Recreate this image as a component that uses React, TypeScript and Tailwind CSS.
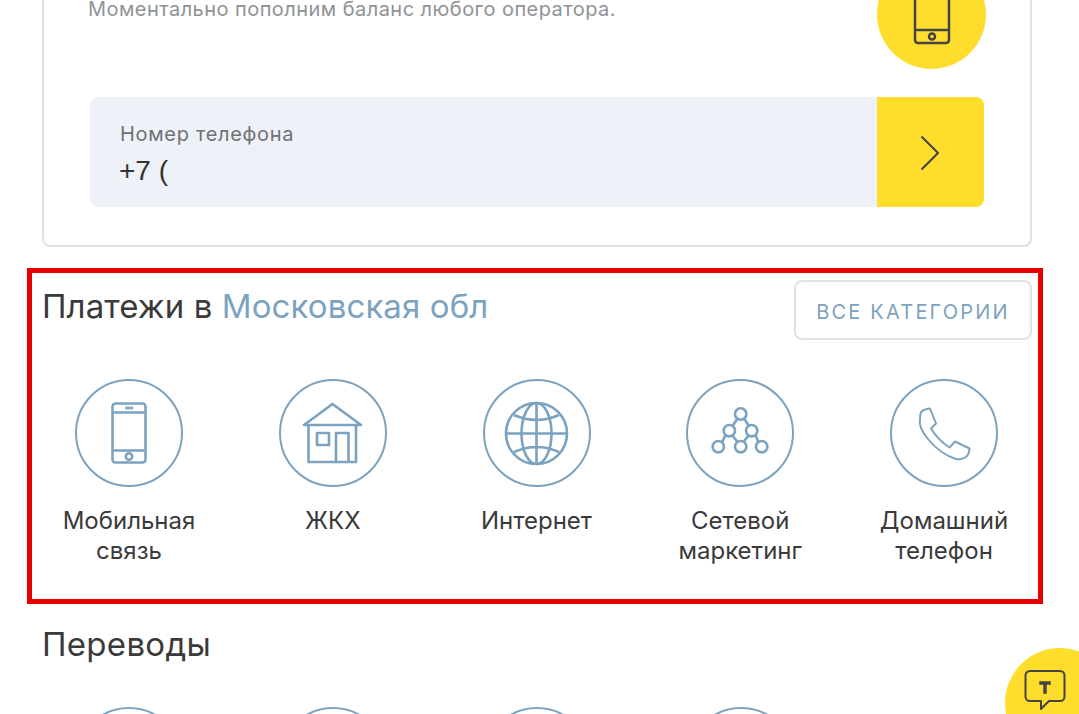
const FONT = "[font-family:Inter,'Noto_Sans',sans-serif]";
const ICON = "block -m-[2.5px] w-[108px] h-[108px] max-w-none";

function PhoneIcon() {
  return (
    <svg viewBox="0 0 108 108" className={ICON} fill="none" stroke="#7ba3c0" strokeWidth="2.6">
      <rect x="37.500" y="24.500" width="33" height="59" rx="3" />
      <path d="M37.500 33.500h33M37.500 71.500h33M50 29h8" />
      <circle cx="54" cy="77.500" r="3.200" />
    </svg>
  );
}

function HouseIcon() {
  return (
    <svg viewBox="0 0 108 108" className={ICON} fill="none" stroke="#7ba3c0" strokeWidth="2.6" strokeLinejoin="round">
      <path d="M26 46L54.500 25 83 46z" />
      <path d="M30.500 46v37h47.500V46" />
      <rect x="39" y="54" width="12" height="12" />
      <path d="M58 83V54h12.500v29" />
    </svg>
  );
}

function GlobeIcon() {
  return (
    <svg viewBox="0 0 108 108" className={ICON} fill="none" stroke="#7ba3c0" strokeWidth="2.6">
      <circle cx="54.500" cy="54.500" r="30.500" />
      <ellipse cx="54.500" cy="54.500" rx="15" ry="30.500" />
      <path d="M54.500 24v61M24 54.500h61M32 36Q54.500 46 77 36M32 73Q54.500 63 77 73" />
    </svg>
  );
}

function NetworkIcon() {
  return (
    <svg viewBox="0 0 108 108" className={ICON} fill="none" stroke="#7ba3c0" strokeWidth="2.6">
      <circle cx="54.700" cy="35" r="5.700" />
      <circle cx="43.300" cy="51.700" r="5.700" />
      <circle cx="65.700" cy="51.700" r="5.700" />
      <circle cx="32.300" cy="67.700" r="5.700" />
      <circle cx="54.700" cy="67.700" r="5.700" />
      <circle cx="75.700" cy="67.700" r="5.700" />
      <path d="M51.500 39.500l-5 7.500M58 39.500l5 7.500M46.500 56.500l5 6.500M62.500 56.500l-5 6.500M39.500 56l-3.500 7.500M69.500 56l3 7.500" />
    </svg>
  );
}

function HandsetIcon() {
  return (
    <svg viewBox="0 0 108 108" className={ICON} fill="none" stroke="#7ba3c0" strokeWidth="2" strokeLinejoin="round">
      <path d="M31 33Q35 29.500 40 29.500L46 44.500 41 49.500Q48 61 59.500 68.500L65 62.500 79.500 69.500Q79 76 76 78 72 81 66 80 50 75 38 60 28 48 30 40 30 36 31 33z" />
    </svg>
  );
}

const categories = [
  { label: ["Мобильная", "связь"], icon: <PhoneIcon /> },
  { label: ["ЖКХ"], icon: <HouseIcon /> },
  { label: ["Интернет"], icon: <GlobeIcon /> },
  { label: ["Сетевой", "маркетинг"], icon: <NetworkIcon /> },
  { label: ["Домашний", "телефон"], icon: <HandsetIcon /> },
];

function Circle({ children }: { children?: React.ReactNode }) {
  return (
    <div className="w-[108px] h-[108px] shrink-0 rounded-full border-[2.5px] border-[#7ba3c0] box-border">
      {children}
    </div>
  );
}

export default function App() {
  return (
    <div className={`relative h-[714px] overflow-hidden bg-white pl-[42px] pr-[47px] ${FONT}`}>
      {/* Верхняя карточка */}
      <div className="-mt-[60px] h-[307px] rounded-b-lg border-2 border-[#e2e2e2] pl-[46px] pr-[46px]">
        <div className="flex justify-between items-start h-[155px] -mr-[2px]">
          <p className="-ml-[2px] pt-[53px] text-[20px] leading-[28px] tracking-[0.45px] text-[#8f9396]">
            Моментально пополним баланс любого оператора.
          </p>
          <div className="mt-[18px] w-[109px] h-[109px] rounded-full bg-[#ffdd2d] flex items-center justify-center">
            <svg width="38" height="62" viewBox="0 0 38 62" fill="none" stroke="#444" strokeWidth="2.5">
              <rect x="2" y="2" width="34" height="57" rx="3" />
              <path d="M2 46h34" />
              <circle cx="19" cy="52.500" r="3" />
            </svg>
          </div>
        </div>
        <div className="flex h-[110px] rounded-lg overflow-hidden">
          <div className="flex-1 bg-[#eef1f7] pl-[29px] pt-[25px]">
            <div className="pl-[1px] text-[20px] leading-[24px] tracking-[0.7px] text-[#6f7276]">Номер телефона</div>
            <div className="mt-[7px] text-[28px] leading-[36px] text-[#333] [font-family:'Liberation_Sans',sans-serif]">+7 (</div>
          </div>
          <div className="w-[107px] bg-[#ffdd2d] flex items-center justify-center">
            <svg width="19" height="36" viewBox="0 0 19 36" fill="none" stroke="#444" strokeWidth="2" className="mt-[2px] -ml-[3px]">
              <path d="M1.500 1.500L18 18 1.500 34.500" />
            </svg>
          </div>
        </div>
      </div>

      {/* Платежи */}
      <section className="mt-[21px] -ml-[15px] -mr-[11px] h-[336px] border-[5px] border-[#e60000] box-border">
        <div className="flex justify-between items-start pl-[10px] pr-[6px] pt-[7px]">
          <h2 className="pt-[5px] text-[33px] leading-[42px] tracking-[0.1px] font-normal text-[#3a3a3a]">
            Платежи в <span className="text-[#7ba3c0]">Московская обл</span>
          </h2>
          <button className="w-[238px] h-[60px] pt-[3px] rounded-lg border-2 border-[#e2e2e2] text-[20px] tracking-[2.2px] text-[#7ba3c0] bg-white">
            ВСЕ КАТЕГОРИИ
          </button>
        </div>
        <div className="mt-[39px] flex justify-between pl-[33px] pr-[30px]">
          {categories.map((c) => (
            <div key={c.label[0]} className="w-[128px] flex flex-col items-center">
              <Circle>{c.icon}</Circle>
              <div className="mt-[19px] text-center text-[24px] leading-[30px] text-[#3a3a3a] whitespace-nowrap">
                {c.label.map((l) => (
                  <div key={l}>{l}</div>
                ))}
              </div>
            </div>
          ))}
        </div>
      </section>

      {/* Переводы */}
      <h2 className="mt-[19px] text-[33px] leading-[42px] tracking-[0.3px] font-normal text-[#3a3a3a]">Переводы</h2>
      <div className="mt-[42px] flex gap-[96px] pl-[33px]">
        {[0, 1, 2, 3].map((i) => (
          <Circle key={i} />
        ))}
      </div>

      {/* Чат */}
      <button className="absolute left-[1005px] top-[648px] w-[110px] h-[110px] rounded-full bg-[#ffdd2d]">
        <svg width="42" height="42" viewBox="0 0 42 42" fill="none" stroke="#444" strokeWidth="2" strokeLinejoin="round" className="absolute left-[19px] top-[21px]">
          <path d="M6 2h30a4.500 4.500 0 0 1 4.500 4.500v21a4.500 4.500 0 0 1-4.500 4.500H25l-8 8v-8H6a4.500 4.500 0 0 1-4.500-4.500v-21A4.500 4.500 0 0 1 6 2z" />
          <path d="M15.500 12.500h11v3h-4v9h-3v-9h-4z" fill="#444" strokeWidth="0.5" />
        </svg>
      </button>
    </div>
  );
}
